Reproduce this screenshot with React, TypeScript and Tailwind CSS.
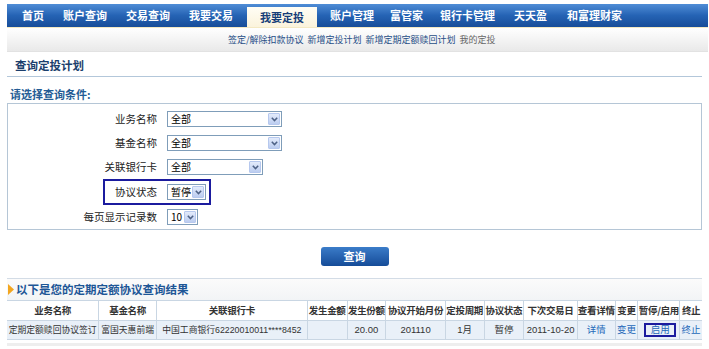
import React from "react";

const CJK = { fontFamily: '"Noto Sans CJK SC", "Noto Sans", sans-serif' };

function Select({ w, text }: { w: number; text: string }) {
  return (
    <div
      className="h-[16px] border border-[#7f9db9] bg-white flex items-center justify-between pl-[3px] pr-[1px] whitespace-nowrap"
      style={{ width: w }}
    >
      <span className="text-[10px] leading-none text-black whitespace-nowrap">{text}</span>
      <div className="shrink-0 w-[12px] h-[12px] bg-gradient-to-b from-[#e3ebfb] to-[#bccdf0] border border-[#b6c8ee] rounded-[1px] flex items-center justify-center">
        <svg width="7" height="5" viewBox="0 0 7 5">
          <path d="M0.8 0.8 L3.5 3.6 L6.2 0.8" stroke="#4d6185" strokeWidth="1.5" fill="none" />
        </svg>
      </div>
    </div>
  );
}

const navItems: { t: string; w: number; ml: number }[] = [
  { t: "首页", w: 22, ml: 15 },
  { t: "账户查询", w: 44, ml: 19 },
  { t: "交易查询", w: 44, ml: 19 },
  { t: "我要交易", w: 44, ml: 19 },
];
const navItems2: { t: string; w: number; ml: number }[] = [
  { t: "账户管理", w: 44, ml: 13 },
  { t: "富管家", w: 33, ml: 16 },
  { t: "银行卡管理", w: 55, ml: 17 },
  { t: "天天盈", w: 33, ml: 19 },
  { t: "和富理财家", w: 55, ml: 20 },
];

const cols = [93, 58, 152, 40, 39, 60, 39, 40, 54, 38, 23, 42, 22];
const heads = ["业务名称", "基金名称", "关联银行卡", "发生金额", "发生份额", "协议开始月份", "定投周期", "协议状态", "下次交易日", "查看详情", "变更", "暂停/启用", "终止"];

export default function App() {
  return (
    <div className="w-[709px] h-[349px] bg-white overflow-hidden" style={CJK}>
      {/* Nav bar */}
      <div className="pt-[4px] pl-[7px] pr-[1px]">
        <div className="h-[23px] bg-gradient-to-b from-[#4f8dd6] via-[#2563b4] to-[#184d99] flex items-end">
          {navItems.map((n) => (
            <div
              key={n.t}
              className="h-[23px] flex items-center justify-center text-white font-bold text-[11px] whitespace-nowrap"
              style={{ width: n.w, marginLeft: n.ml }}
            >
              {n.t}
            </div>
          ))}
          <div className="ml-[14px] w-[70px] h-[20px] bg-gradient-to-b from-[#fffdf5] to-[#fbf3dc] flex items-center justify-center text-[#173e78] font-bold text-[11px] whitespace-nowrap">
            我要定投
          </div>
          {navItems2.map((n) => (
            <div
              key={n.t}
              className="h-[23px] flex items-center justify-center text-white font-bold text-[11px] whitespace-nowrap"
              style={{ width: n.w, marginLeft: n.ml }}
            >
              {n.t}
            </div>
          ))}
        </div>
        {/* Submenu */}
        <div className="h-[25px] border-t border-[#f4e9c3] bg-gradient-to-b from-[#ffffff] to-[#e9e9e9] border-b border-b-[#e2e2e2] flex items-center text-[9px] leading-none pl-[221px] whitespace-nowrap">
          <span className="text-[#1f4e86]">签定/解除扣款协议</span>
          <span className="text-[#1f4e86] ml-[4px]">新增定投计划</span>
          <span className="text-[#1f4e86] ml-[4px]">新增定期定额赎回计划</span>
          <span className="text-[#666] ml-[4px]">我的定投</span>
        </div>
      </div>

      {/* Title */}
      <div className="mx-[7px] h-[25px] border-b border-[#b3c7da] flex items-center pl-[8px] pt-[3px]">
        <span className="text-[11.5px] font-bold text-[#1b3e6c] leading-none">查询定投计划</span>
      </div>
      <div className="h-[26px] flex items-center pl-[10px] pt-[8px]">
        <span className="text-[11px] font-bold text-[#245c95] leading-none">请选择查询条件:</span>
      </div>

      {/* Form */}
      <div className="mx-[7px] h-[127px] border border-[#b5c6d6] pt-[3px] relative">
        {[
          { l: "业务名称", w: 115, t: "全部", h: 24 },
          { l: "基金名称", w: 115, t: "全部", h: 24 },
          { l: "关联银行卡", w: 96, t: "全部", h: 24 },
          { l: "协议状态", w: 39, t: "暂停", h: 26 },
          { l: "每页显示记录数", w: 31, t: "10", h: 24 },
        ].map((r) => (
          <div key={r.l} className="flex items-center" style={{ height: r.h }}>
            <div className="w-[149px] text-right text-[10.5px] text-[#222] leading-none whitespace-nowrap">{r.l}</div>
            <div className="ml-[10px]">
              <Select w={r.w} text={r.t} />
            </div>
          </div>
        ))}
        <div className="absolute left-[95px] top-[75px] w-[108px] h-[26px] border-2 border-[#1b1b9e]" />
      </div>

      {/* Button */}
      <div className="flex justify-center mt-[17px]">
        <div className="w-[68px] h-[19px] rounded-[3px] bg-gradient-to-b from-[#3b7cc9] to-[#154c98] flex items-center justify-center text-white font-bold text-[11px] leading-none">
          查询
        </div>
      </div>

      {/* Result header */}
      <div className="mx-[7px] mt-[12px] h-[22px] border-t border-[#d3dce6] bg-gradient-to-b from-[#fbfbfb] to-[#f2f4f6] flex items-center">
        <svg width="6" height="11" viewBox="0 0 6 11" className="ml-[1px]">
          <path d="M0 0 L6 5.5 L0 11 Z" fill="#f3a61f" />
        </svg>
        <span className="ml-[2px] text-[11.5px] font-bold text-[#1d5696] leading-none">以下是您的定期定额协议查询结果</span>
      </div>

      {/* Table */}
      <div className="mx-[7px] border-t border-[#c9d6e3]">
        <div className="flex h-[20px] bg-white border-b border-[#c9d6e3]">
          {heads.map((h, i) => (
            <div
              key={h}
              className={`flex items-center justify-center text-[9.5px] font-bold text-[#333] leading-none whitespace-nowrap tracking-[-0.3px] ${i < heads.length - 1 ? "border-r border-[#c9d6e3]" : ""}`}
              style={{ width: cols[i] }}
            >
              {h}
            </div>
          ))}
        </div>
        <div className="flex h-[19px] bg-[#e9f0f8] border-b border-[#c9d6e3]">
          {[
            { t: "定期定额赎回协议签订" },
            { t: "富国天惠前端" },
            { t: "中国工商银行62220010011****8452" },
            { t: "" },
            { t: "20.00" },
            { t: "201110" },
            { t: "1月" },
            { t: "暂停" },
            { t: "2011-10-20" },
            { t: "详情", link: true },
            { t: "变更", link: true },
            { t: "启用", link: true, box: true },
            { t: "终止", link: true },
          ].map((c, i) => (
            <div
              key={i}
              className={`flex items-center justify-center leading-none whitespace-nowrap ${i < 3 ? "text-[8.8px]" : "text-[9.5px]"} ${c.link ? "text-[#2468b8]" : "text-[#333]"} ${i < cols.length - 1 ? "border-r border-[#c9d6e3]" : ""}`}
              style={{ width: cols[i], fontFamily: /\d/.test(c.t) ? '"Liberation Sans", "Noto Sans CJK SC", sans-serif' : undefined }}
            >
              {c.box ? (
                <div className="ml-[3px] w-[32px] h-[14px] border-2 border-[#1b1b9e] flex items-center justify-center">
                  {c.t}
                </div>
              ) : (
                <span>{c.t}</span>
              )}
            </div>
          ))}
        </div>
        <div className="mt-[3px] h-[3px] bg-[#eeeeee]" />
      </div>
    </div>
  );
}
